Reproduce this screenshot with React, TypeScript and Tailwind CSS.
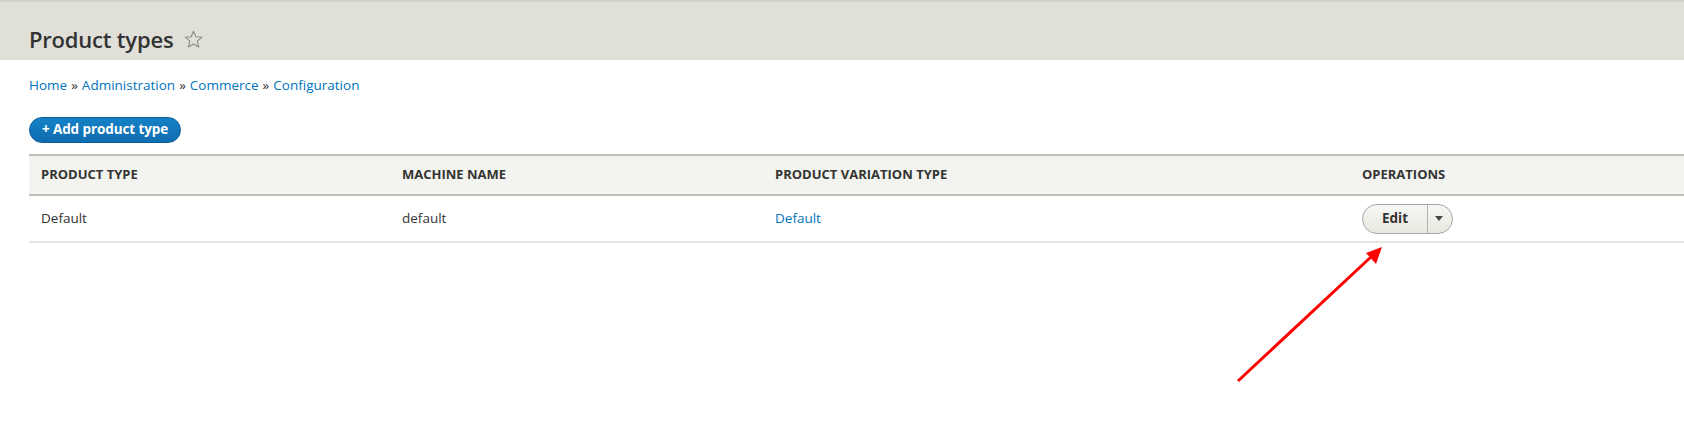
import React from "react";

export default function App() {
  const font = { fontFamily: '"Open Sans", "Noto Sans", sans-serif' };
  return (
    <div className="relative w-[1684px] h-[431px] bg-white overflow-hidden text-[#333]" style={font}>
      <div className="h-[60px] bg-[#e0e0d8] border-t-2 border-[#d2d2ca] pl-[29px] pt-[22px]">
        <h1 className="flex items-center gap-[10px] text-[22px] leading-[30px] font-semibold text-[#333] tracking-[-0.2px]">
          Product types
          <svg width="21" height="21" viewBox="0 0 24 24" className="mt-[1px]">
            <path d="M12 2.5l2.8 6.3 6.8.6-5.2 4.5 1.6 6.7L12 17.1l-5.9 3.5 1.6-6.7L2.5 9.4l6.8-.6z" fill="none" stroke="#8a8a80" strokeWidth="1.2" strokeLinejoin="round" />
          </svg>
        </h1>
      </div>

      <div className="pl-[29px] pt-[16px] text-[13.5px] leading-[18px] text-[#0074bd] flex gap-[4px]">
        <span>Home</span><span className="text-[#333]">»</span>
        <span>Administration</span><span className="text-[#333]">»</span>
        <span>Commerce</span><span className="text-[#333]">»</span>
        <span>Configuration</span>
      </div>

      <div className="pl-[29px] pt-[23px]">
        <button className="h-[26px] w-[152px] rounded-full bg-gradient-to-b from-[#1581c6] to-[#0f6cb0] border border-[#0b5e9c] text-white font-bold text-[13.5px] leading-none flex items-center justify-center tracking-[-0.1px]">
          + Add product type
        </button>
      </div>

      <div className="ml-[29px] mt-[11px]">
        <div className="grid grid-cols-[361px_373px_587px_1fr] bg-[#f3f3ef] border-t-2 border-b-2 border-[#bfbfba] h-[42px] items-center text-[13px] font-bold uppercase text-[#333]">
          <div className="pl-[12px]">Product type</div>
          <div className="pl-[12px]">Machine name</div>
          <div className="pl-[12px]">Product variation type</div>
          <div className="pl-[12px]">Operations</div>
        </div>
        <div className="grid grid-cols-[361px_373px_587px_1fr] border-b-2 border-[#e6e4df] h-[47px] items-center text-[13.5px]">
          <div className="pl-[12px]">Default</div>
          <div className="pl-[12px]">default</div>
          <div className="pl-[12px] text-[#0074bd]">Default</div>
          <div className="pl-[12px]">
            <div className="flex h-[30px] w-[91px] rounded-full border border-[#a6a6a6] bg-gradient-to-b from-[#f6f6f3] to-[#e8e8e0] items-stretch">
              <div className="w-[64px] flex items-center justify-center font-bold text-[13.5px] text-[#333]">Edit</div>
              <div className="w-px bg-[#b4b4ae]" />
              <div className="flex-1 flex items-center justify-center pr-[2px]">
                <svg width="8" height="5" viewBox="0 0 8 5"><path d="M0 0h8L4 5z" fill="#444" /></svg>
              </div>
            </div>
          </div>
        </div>
      </div>

      <svg className="absolute left-0 top-0 pointer-events-none" width="1684" height="431">
        <line x1="1238" y1="381" x2="1372" y2="256" stroke="#ff0000" strokeWidth="3" />
        <polygon points="1382,247 1366,253 1376,264" fill="#ff0000" />
      </svg>
    </div>
  );
}
